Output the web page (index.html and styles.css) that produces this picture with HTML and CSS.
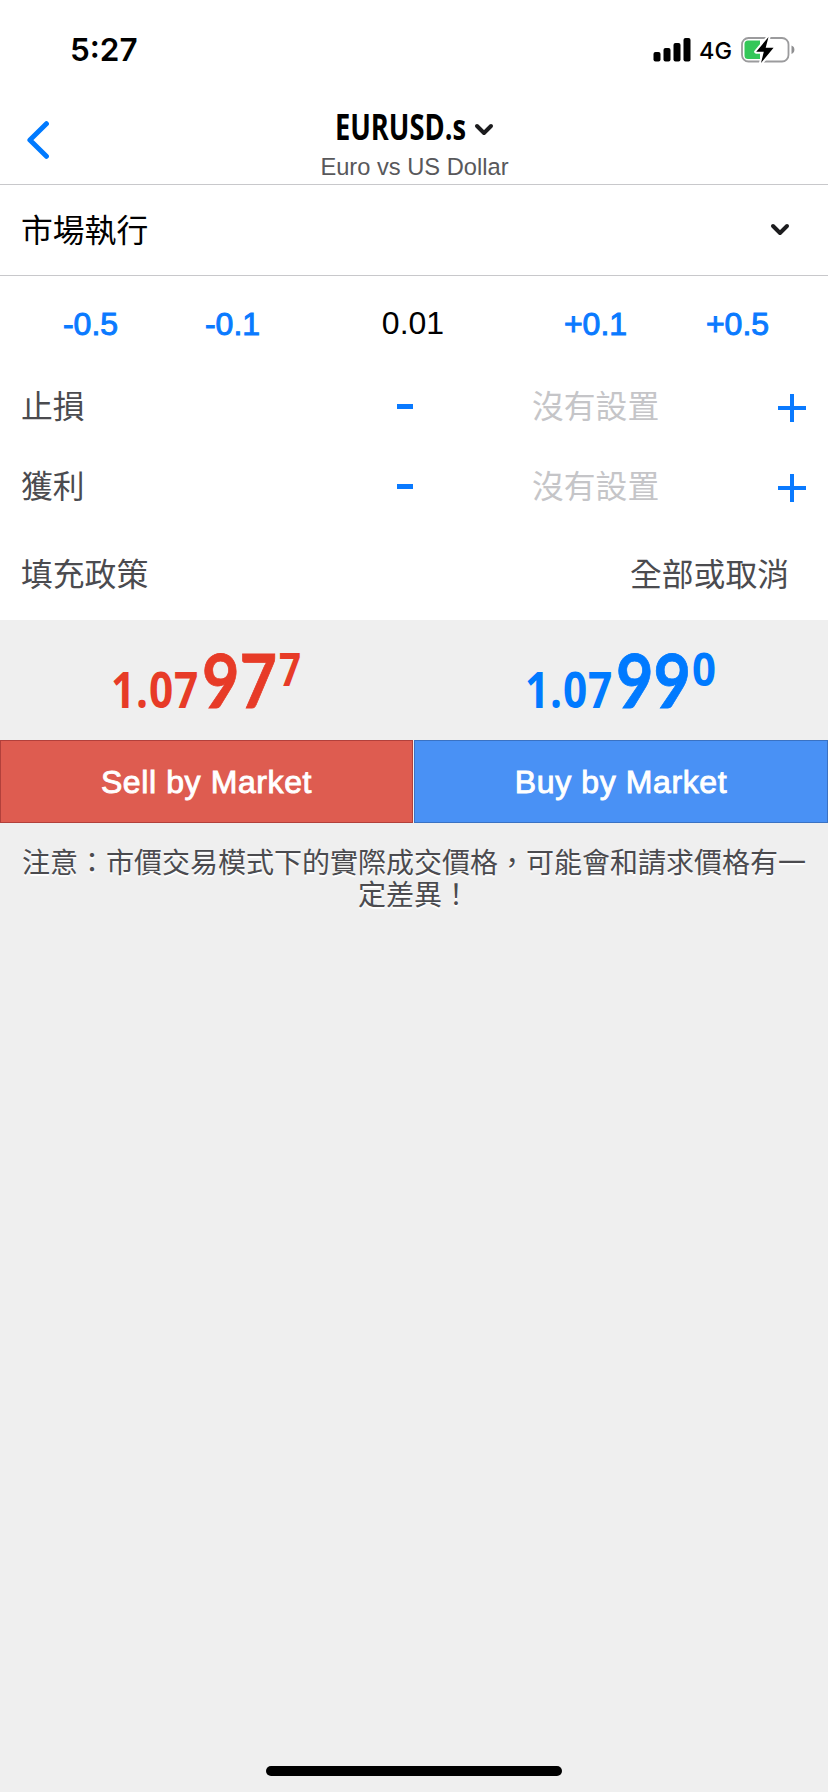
FILE: index.html
```html
<!DOCTYPE html>
<html lang="zh-TW">
<head>
<meta charset="utf-8">
<title>EURUSD.s</title>
<link rel="stylesheet" href="styles.css">
</head>
<body>
<div class="screen">
  <div class="status">
    <span class="clock">5:27</span>
    <div class="indicators">
      <svg class="signal" width="38" height="24" viewBox="0 0 38 24">
        <rect x="0.5" y="14" width="7" height="9.5" rx="2"/>
        <rect x="10.500" y="10" width="7" height="13.500" rx="2"/>
        <rect x="20.500" y="5" width="7" height="18.500" rx="2"/>
        <rect x="30.500" y="0" width="7" height="23.500" rx="2"/>
      </svg>
      <span class="network">4G</span>
      <svg class="battery" width="54" height="28" viewBox="0 0 54 28">
        <rect x="1" y="2" width="46.500" height="23.500" rx="6.500" fill="none" stroke="#9b9b9d" stroke-width="1.800"/>
        <path d="M50.500 9.500c1.900.7 2.900 2.200 2.900 4.200s-1 3.500-2.900 4.200z" fill="#8f8f91"/>
        <path d="M7 4.500H19V23H7a3.500 3.500 0 0 1-3.500-3.500V8A3.500 3.500 0 0 1 7 4.500z" fill="#34c759"/>
        <path d="M27.500 1L15.200 15.800h7.600L20 27 32.600 11.700h-7.900z" fill="#000" stroke="#fff" stroke-width="4" stroke-linejoin="round" paint-order="stroke"/>
      </svg>
    </div>
  </div>

  <header class="nav">
    <svg class="back" width="22" height="38" viewBox="0 0 22 38">
      <path d="M19.400 2.700L2.900 19l16.500 16.300" fill="none" stroke="#007aff" stroke-width="5" stroke-linecap="round" stroke-linejoin="round"/>
    </svg>
    <div class="heading">
      <div class="symbol">
        <svg class="symbol-name" width="132" height="40" viewBox="0 0 132 40"><text class="symbol-text" x="0" y="30.500" textLength="131" lengthAdjust="spacingAndGlyphs">EURUSD.s</text></svg>
        <svg class="chevron" width="20" height="14" viewBox="0 0 20 14"><path d="M3 3l7 7 7-7"/></svg>
      </div>
      <div class="subtitle">Euro vs US Dollar</div>
    </div>
    <div class="nav-spacer"></div>
  </header>

  <div class="row mode">
    <span>市場執行</span>
    <svg class="chevron" width="20" height="14" viewBox="0 0 20 14"><path d="M3 3l7 7 7-7"/></svg>
  </div>

  <div class="volume">
    <span class="step">-0.5</span>
    <span class="step">-0.1</span>
    <span class="lots">0.01</span>
    <span class="step">+0.1</span>
    <span class="step">+0.5</span>
  </div>

  <div class="level">
    <span class="label">止損</span>
    <svg class="minus" width="16" height="5"><rect width="16" height="5"/></svg>
    <span class="unset">沒有設置</span>
    <svg class="plus" width="28" height="28"><path d="M0 14h28M14 0v28"/></svg>
  </div>
  <div class="level">
    <span class="label">獲利</span>
    <svg class="minus" width="16" height="5"><rect width="16" height="5"/></svg>
    <span class="unset">沒有設置</span>
    <svg class="plus" width="28" height="28"><path d="M0 14h28M14 0v28"/></svg>
  </div>
  <div class="row fill">
    <span>填充政策</span>
    <span>全部或取消</span>
  </div>

  <div class="prices">
    <svg class="price bid" width="414" height="120" viewBox="0 0 414 120">
      <text class="base" x="111" y="88" textLength="88" lengthAdjust="spacingAndGlyphs">1.07</text>
      <text class="pips" x="202" y="88" textLength="75" lengthAdjust="spacingAndGlyphs">97</text>
      <text class="point" x="279" y="66" textLength="22" lengthAdjust="spacingAndGlyphs">7</text>
    </svg>
    <svg class="price ask" width="414" height="120" viewBox="0 0 414 120">
      <text class="base" x="111" y="88" textLength="88" lengthAdjust="spacingAndGlyphs">1.07</text>
      <text class="pips" x="202" y="88" textLength="75" lengthAdjust="spacingAndGlyphs">99</text>
      <text class="point" x="278" y="66" textLength="24" lengthAdjust="spacingAndGlyphs">0</text>
    </svg>
  </div>

  <div class="actions">
    <div class="action sell">Sell by Market</div>
    <div class="action buy">Buy by Market</div>
  </div>

  <p class="note">注意：市價交易模式下的實際成交價格，可能會和請求價格有一定差異！</p>

  <div class="home"></div>
</div>
</body>
</html>
```
FILE: styles.css
```css
* { box-sizing: border-box; }

body {
  margin: 0;
  background: #efefef;
  font-family: "Liberation Sans", "Noto Sans CJK TC", sans-serif;
  color: #4b4b4f;
}

svg { display: block; flex: none; }

.screen {
  display: flex;
  flex-direction: column;
  width: 828px;
  height: 1792px;
}

.status, .nav, .row, .volume, .level { background: #fff; flex: none; }

.status {
  height: 100px;
  display: flex;
  justify-content: space-between;
  align-items: center;
  padding: 0 33px 0 70px;
  color: #000;
}

.clock {
  font: 600 31.5px/40px Inter, sans-serif;
}

.indicators { display: flex; align-items: center; }
.signal { margin-right: 8px; }
.network { font: 500 23.5px/30px Inter, sans-serif; width: 32px; margin-right: 10px; padding-top: 1px; }

.nav {
  height: 85px;
  display: flex;
  justify-content: space-between;
  border-bottom: 1px solid #c8c8cb;
}

.back { margin: 21px 0 0 27px; }
.nav-spacer { width: 48px; }

.heading {
  display: flex;
  flex-direction: column;
  align-items: center;
}

.symbol { display: flex; margin-top: 9px; gap: 7px; }
.symbol .chevron { margin-top: 14px; }
.symbol-name { overflow: visible; }
.symbol-text { font: 700 35px "Open Sans", sans-serif; fill: #000; }

.chevron path {
  fill: none;
  stroke: #1c1c1e;
  stroke-width: 4;
  stroke-linecap: round;
  stroke-linejoin: round;
}

.subtitle { font-size: 23.7px; line-height: 28px; margin-top: 4px; color: #58585b; }

.row {
  display: flex;
  align-items: center;
  justify-content: space-between;
  font-size: 31.8px;
  line-height: 40px;
}

.row span, .level span { padding-top: 2px; }

.mode {
  height: 91px;
  padding: 0 38px 0 21px;
  color: #000;
  border-bottom: 1px solid #c8c8cb;
}

.volume {
  height: 90px;
  display: grid;
  grid-template-columns: 142px 142px 221px 142px 142px;
  justify-content: center;
  align-items: center;
  text-align: center;
  font-size: 32px;
  line-height: 40px;
  padding-top: 6px;
}

.step { color: #0a7aff; -webkit-text-stroke: 1px #0a7aff; }
.lots { color: #000; padding: 0 2px 2px 0; }

.level {
  height: 80px;
  display: grid;
  grid-template-columns: 376px 135px 246px 28px;
  align-items: center;
  padding-left: 21px;
  font-size: 31.8px;
  line-height: 40px;
}

.minus { fill: #0a7aff; }
.unset { color: #c5c5c8; }
.plus { fill: none; stroke: #0a7aff; stroke-width: 4; margin-top: 3px; }

.level + .row { padding-top: 1px; }
.fill { height: 94px; padding: 0 39px 0 21px; }

.prices { display: flex; height: 120px; flex: none; }
.price .base { font: 700 51px "Open Sans", sans-serif; letter-spacing: 1px; }
.price .pips { font: 700 75px Lato, sans-serif; stroke-width: 0.8px; }
.price .point { font: 700 47px "Open Sans", sans-serif; }
.bid { fill: #e73b27; }
.ask { fill: #007aff; }
.bid .pips { stroke: #e73b27; }
.ask .pips { stroke: #007aff; }

.actions {
  display: grid;
  grid-template-columns: 413px 414px;
  gap: 1px;
  height: 83px;
  flex: none;
}

.action {
  display: flex;
  align-items: center;
  justify-content: center;
  color: #fff;
  font-size: 32px;
  letter-spacing: 0.6px;
  -webkit-text-stroke: 0.9px #fff;
  padding-top: 2px;
}

.sell { background: #de5c50; border: 1px solid #b2403b; }
.buy { background: #4991f5; border: 1px solid #3a72c3; }

.note {
  margin: 25px 22px 0;
  font-size: 28px;
  line-height: 32px;
  text-align: center;
  text-shadow: 0 2px 1px #fff;
}

.home {
  width: 296px;
  height: 10px;
  border-radius: 5px;
  background: #000;
  margin: auto auto 16px;
}
```
